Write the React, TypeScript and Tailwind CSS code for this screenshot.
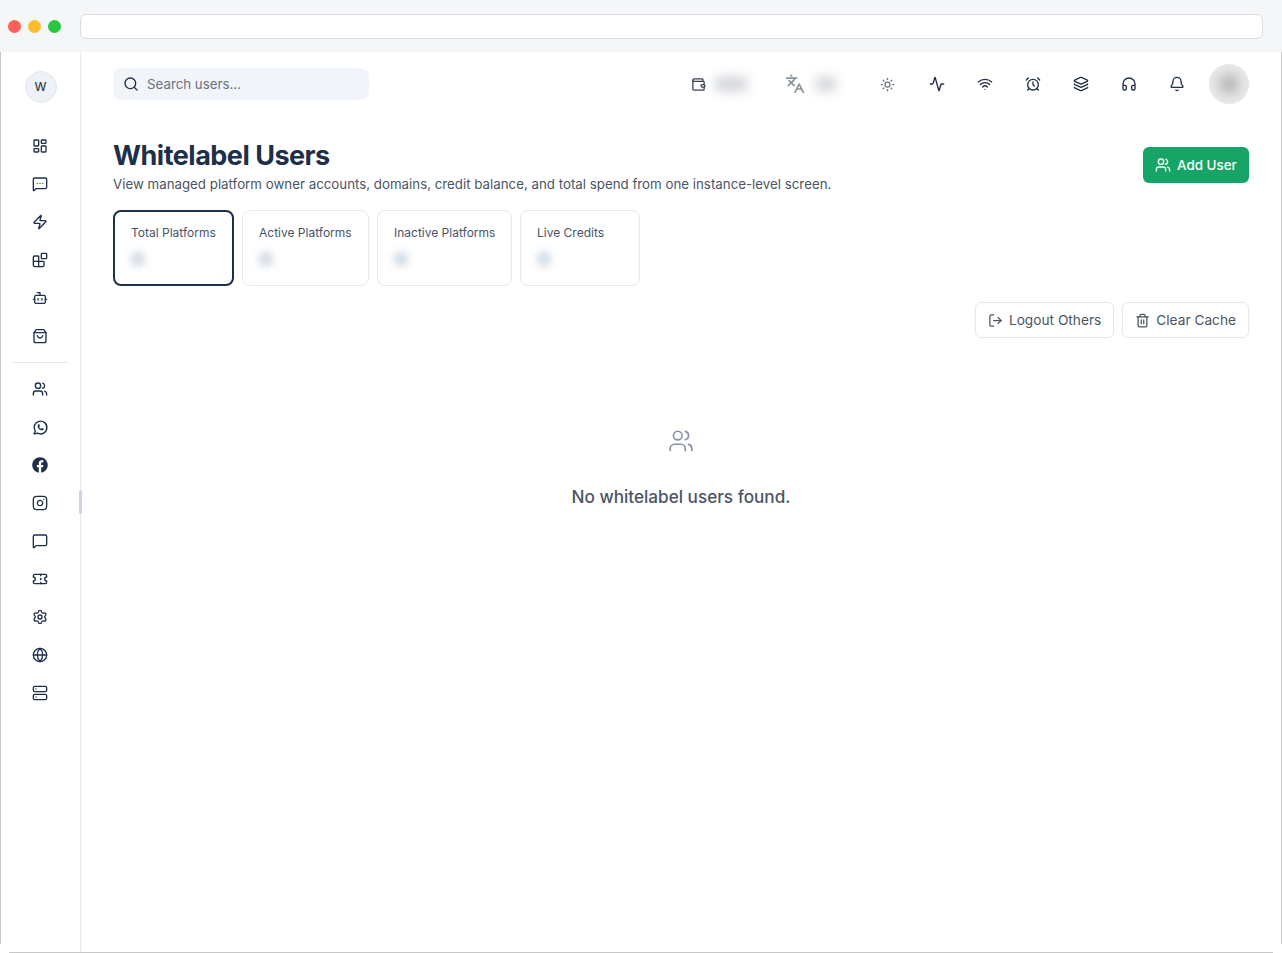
import {
  AlarmClock,
  Activity,
  Bell,
  Blocks,
  Bot,
  Globe,
  Headphones,
  Instagram,
  Languages,
  Layers,
  LayoutDashboard,
  LogOut,
  MessageSquare,
  MessageSquareMore,
  Search,
  Server,
  Settings,
  Sun,
  Ticket,
  Trash2,
  Users,
  Wallet,
  Wifi,
  Zap,
} from "lucide-react";
import { FaFacebook } from "react-icons/fa";
import { TbBrandWhatsapp } from "react-icons/tb";
import type { ReactNode } from "react";

function StoreBag() {
  return (
    <svg width="16" height="16" viewBox="0 0 24 24" fill="none" stroke="currentColor" strokeWidth="2" strokeLinecap="round" strokeLinejoin="round">
      <path d="M6.5 2.5h11L21 7v12a3 3 0 0 1-3 3H6a3 3 0 0 1-3-3V7Z" />
      <path d="M3 7h18" />
      <path d="M8 11.500c1 2.500 2.500 3.500 4 3.500s3-1 4-3.500" />
    </svg>
  );
}

function SideIcon({ children }: { children: ReactNode }) {
  return <div className="flex h-[38px] w-full items-center justify-center text-[#1e2f4a]">{children}</div>;
}

function TopIcon({ children }: { children: ReactNode }) {
  return <div className="flex h-10 w-12 items-center justify-center text-[#1e2f4a]">{children}</div>;
}

const stats = [
  { label: "Total Platforms", width: "w-[121px]", active: true },
  { label: "Active Platforms", width: "w-[127px]", active: false },
  { label: "Inactive Platforms", width: "w-[135px]", active: false },
  { label: "Live Credits", width: "w-[120px]", active: false },
];

function Sidebar() {
  return (
    <aside className="flex w-[81px] shrink-0 flex-col items-center border-r border-[#e8eaed] pt-[19px]">
      <div className="ml-px flex h-8 w-8 items-center justify-center rounded-full border border-[#e2e8f0] bg-[#eef2f6] text-xs font-medium text-[#374151]">
        W
      </div>
      <div className="mt-[24px] flex w-full flex-col">
        <SideIcon><LayoutDashboard size={16} /></SideIcon>
        <SideIcon><MessageSquareMore size={16} /></SideIcon>
        <SideIcon><Zap size={16} /></SideIcon>
        <SideIcon><Blocks size={16} /></SideIcon>
        <SideIcon><Bot size={16} /></SideIcon>
        <SideIcon><StoreBag /></SideIcon>
      </div>
      <div className="mt-[7px] mb-[7px] h-px w-[55px] bg-[#e5e7eb]" />
      <div className="flex w-full flex-col">
        <SideIcon><Users size={16} /></SideIcon>
        <SideIcon><TbBrandWhatsapp size={17} /></SideIcon>
        <SideIcon><FaFacebook size={16} /></SideIcon>
        <SideIcon><Instagram size={16} /></SideIcon>
        <SideIcon><MessageSquare size={16} /></SideIcon>
        <SideIcon><Ticket size={16} /></SideIcon>
        <SideIcon><Settings size={16} /></SideIcon>
        <SideIcon><Globe size={16} /></SideIcon>
        <SideIcon><Server size={16} /></SideIcon>
      </div>
    </aside>
  );
}

function Header() {
  return (
    <header className="flex h-10 items-center justify-between">
      <div className="flex h-8 w-64 items-center gap-2 rounded-lg bg-[#f1f5f9] px-[10px] text-[13.3px] text-[#6b7280]">
        <Search size={16} className="text-[#1e2f4a]" />
        <span className="pt-px">Search users...</span>
      </div>
      <div className="flex items-center">
        <Wallet size={15} className="text-[#374151]" />
        <div className="ml-[9px] h-[14px] w-8 rounded bg-[#cfd2d6] blur-[6px]" />
        <Languages size={20} className="ml-[38px] text-[#8a93a1]" />
        <div className="ml-[11px] h-[14px] w-5 rounded bg-[#cfd2d6] blur-[6px]" />
        <div className="ml-[27px] flex h-10 w-12 items-center justify-center text-[#6b7280]"><Sun size={15} /></div>
        <div className="ml-[2px] flex">
          <TopIcon><Activity size={16} /></TopIcon>
          <TopIcon><Wifi size={16} /></TopIcon>
          <TopIcon><AlarmClock size={16} /></TopIcon>
          <TopIcon><Layers size={16} /></TopIcon>
          <TopIcon><Headphones size={16} /></TopIcon>
          <TopIcon><Bell size={16} /></TopIcon>
        </div>
        <div className="ml-2 flex h-10 w-10 items-center justify-center overflow-hidden rounded-full bg-[#e8e8e8]">
          <div className="h-5 w-5 rounded-full bg-[#b5b5b5] blur-[6px]" />
        </div>
      </div>
    </header>
  );
}

export default function App() {
  return (
    <div className="relative flex h-[953px] w-[1282px] flex-col overflow-hidden bg-white font-['Inter',sans-serif]">
      <div className="flex h-[52px] shrink-0 items-center bg-[#f5f6f8]">
        <div className="ml-2 flex gap-[7px]">
          <span className="h-[13px] w-[13px] rounded-full bg-[#ff5f57]" />
          <span className="h-[13px] w-[13px] rounded-full bg-[#febc2e]" />
          <span className="h-[13px] w-[13px] rounded-full bg-[#28c840]" />
        </div>
        <div className="ml-[19px] h-[25px] w-[1183px] rounded-md border border-[#dcdde0] bg-white" />
      </div>

      <div className="flex min-h-0 flex-1">
        <Sidebar />
        <main className="flex-1 pr-[33px] pl-[32px] pt-3">
          <Header />
          <div className="mt-9 flex items-start justify-between">
            <div>
              <h1 className="text-[27px] leading-[32px] font-bold tracking-[-0.5px] text-[#1e2f4a]">Whitelabel Users</h1>
              <p className="mt-[2px] text-[13.3px] leading-5 text-[#4b5563]">
                View managed platform owner accounts, domains, credit balance, and total spend from one instance-level screen.
              </p>
            </div>
            <button className="mt-[7px] flex h-9 w-[106px] items-center gap-[6px] rounded-md bg-[#16a566] pl-3 text-[13.4px] font-medium text-white">
              <Users size={16} />
              <span className="pt-px">Add User</span>
            </button>
          </div>

          <div className="mt-4 flex gap-2">
            {stats.map((s) => (
              <div
                key={s.label}
                className={
                  s.active
                    ? `h-[76px] ${s.width} rounded-lg border-2 border-[#1e2f4a] px-4 pt-[13px]`
                    : `h-[76px] ${s.width} rounded-lg border border-[#e8eaed] px-4 pt-[14px]`
                }
              >
                <div className="text-xs leading-4 whitespace-nowrap text-[#475569]">{s.label}</div>
                <div className="mt-[11px] h-[14px] w-[14px] rounded-full bg-[#cbd5e1] blur-[4px]" />
              </div>
            ))}
          </div>

          <div className="mt-4 flex justify-end gap-2">
            <button className="flex h-9 items-center gap-[6px] rounded-md border border-[#e5e7eb] px-3 text-[13.7px] text-[#4b5563]">
              <LogOut size={15} />
              Logout Others
            </button>
            <button className="flex h-9 items-center gap-[6px] rounded-md border border-[#e5e7eb] px-3 text-[13.7px] text-[#4b5563]">
              <Trash2 size={15} />
              Clear Cache
            </button>
          </div>

          <div className="mt-[90px] flex flex-col items-center">
            <Users size={26} strokeWidth={1.5} className="text-[#8792a8]" />
            <p className="mt-[29px] text-[17.15px] leading-7 font-medium text-[#4b5563]">No whitelabel users found.</p>
          </div>
        </main>
      </div>

      {/* window frame edges and sidebar resize handle sit over the page */}
      <div className="absolute top-[52px] left-0 h-[892px] w-px bg-[#c8c8c8]" />
      <div className="absolute top-[52px] right-0 h-[892px] w-px bg-[#c8c8c8]" />
      <div className="absolute bottom-0 left-[9px] h-px w-[1264px] bg-[#c8c8c8]" />
      <div className="absolute top-[490px] left-[79px] h-6 w-[3px] rounded-sm bg-[#cbd5e1]" />
    </div>
  );
}
